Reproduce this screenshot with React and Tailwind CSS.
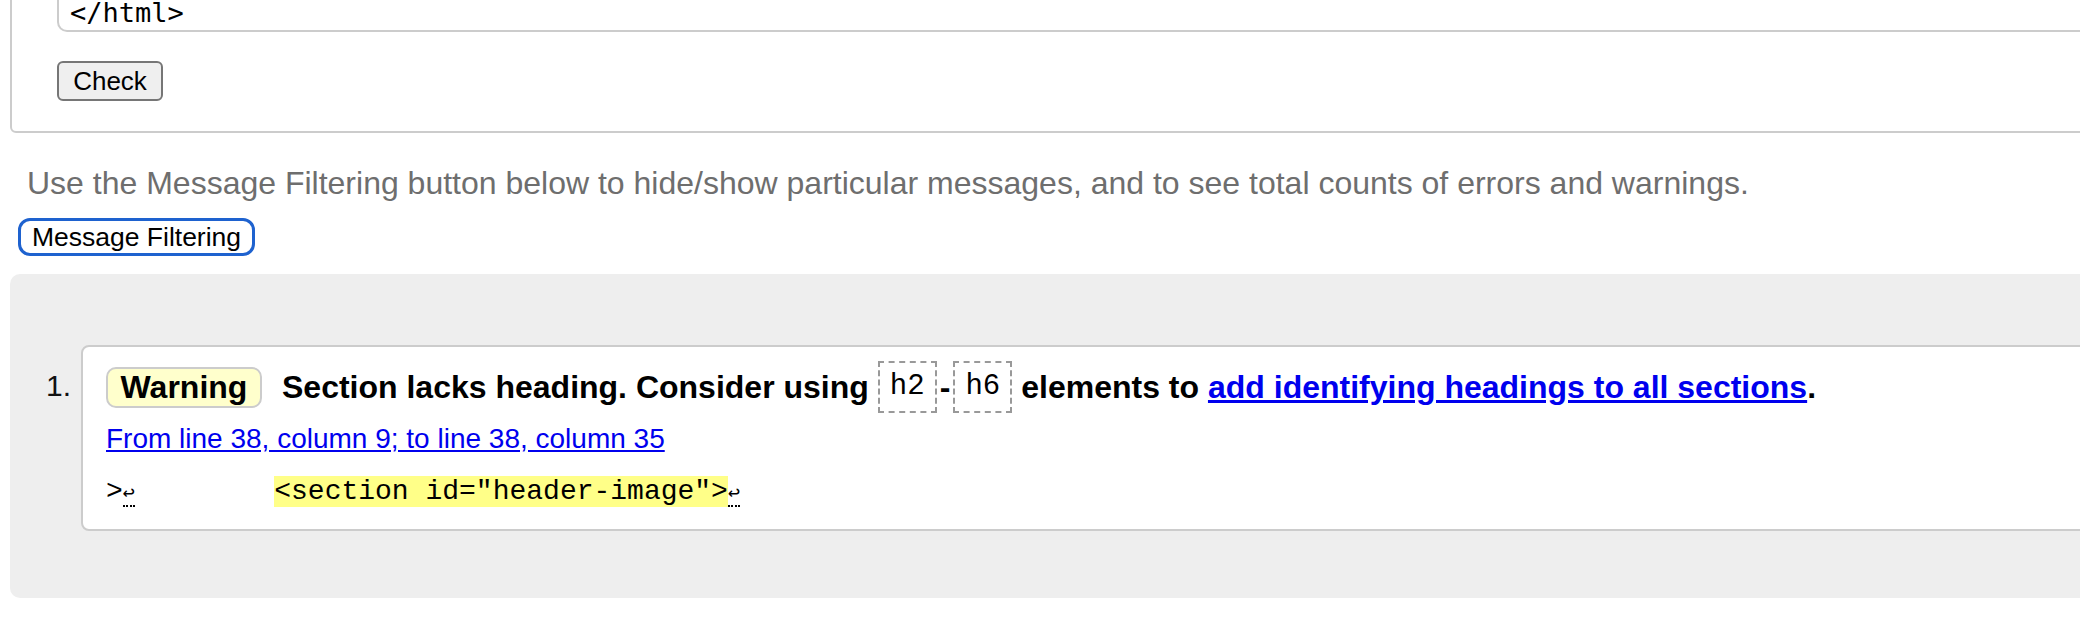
const sans = "font-['Liberation_Sans',Arial,sans-serif]";
const mono = "font-['Liberation_Mono','Courier_New',monospace]";

const CodeChip = ({ children }) => (
  <code className={`${mono} inline-flex items-center justify-center w-[59px] h-[52px] border-2 border-dashed border-[#999] text-[29px] font-normal`}>
    {children}
  </code>
);

// line-break marker shown in the source extract
const LineBreak = () => (
  <span className="inline-block w-[17px] text-[20px] leading-[20px] align-baseline">
    <span className="border-b-2 border-dotted border-black">↩</span>
  </span>
);

export default function App() {
  return (
    <div className={`w-screen h-[622px] overflow-hidden bg-white text-black ${sans}`}>
      <div className="w-[2140px]">
        {/* FORM BOX (scrolled, top is cut off) */}
        <div className="ml-[10px] -mt-[20px] h-[153px] border-2 border-[#ccc] rounded-[6px] pl-[45px]">
          <div className="h-[50px] border-2 border-t-0 border-[#ccc] rounded-b-[10px] flex flex-col justify-end pb-[1px] pl-[11px]">
            <span className="font-['DejaVu_Sans_Mono',monospace] text-[27px] leading-[32px]">&lt;/html&gt;</span>
          </div>
          <button className="mt-[29px] w-[106px] h-[40px] bg-[#efefef] border-2 border-[#767676] rounded-[6px] text-[26px] leading-none">
            Check
          </button>
        </div>

        <p className="ml-[27px] mt-[32px] text-[32px] leading-[36px] text-[#6e6e6e]">
          Use the Message Filtering button below to hide/show particular messages, and to see total counts of errors and warnings.
        </p>

        <button className="ml-[18px] mt-[17px] w-[237px] h-[38px] bg-white border-[3px] border-[#1e62cf] rounded-[12px] text-[26.5px] leading-none">
          Message Filtering
        </button>

        {/* RESULTS PANEL */}
        <div className="ml-[10px] mt-[18px] h-[324px] bg-[#eee] rounded-[10px] pt-[71px] flex">
          <div className="w-[71px] pt-[14px] h-[66px] flex items-center justify-end pr-[10px] text-[30px] text-[#111]">1.</div>
          <div className="flex-1 h-[186px] bg-white border-2 border-[#ccc] rounded-[8px] pl-[23px] pt-[14px]">
            <div className="h-[52px] flex items-center text-[32px] font-bold whitespace-pre">
              <span className="w-[156px] h-[41px] flex items-center justify-center bg-[#ffffcc] border-2 border-[#ccc] rounded-[10px]">Warning</span>
              <span className="ml-[20px]">Section lacks heading. Consider using </span>
              <CodeChip>h2</CodeChip>
              <span className="mx-[3px]">-</span>
              <CodeChip>h6</CodeChip>
              <span> elements to </span>
              <a href="#" className="text-[#0000ee] underline">add identifying headings to all sections</a>
              <span>.</span>
            </div>
            <div className="mt-[10px] text-[28px] leading-[32px]">
              <a href="#" className="text-[#0000ee] underline">From line 38, column 9; to line 38, column 35</a>
            </div>
            <div className={`mt-[20px] ${mono} text-[28px] leading-[33px] whitespace-pre`}>
              &gt;<LineBreak />{"        "}<span className="bg-[#ffff88]">&lt;section id="header-image"&gt;</span><LineBreak />
            </div>
          </div>
        </div>
      </div>
    </div>
  );
}
